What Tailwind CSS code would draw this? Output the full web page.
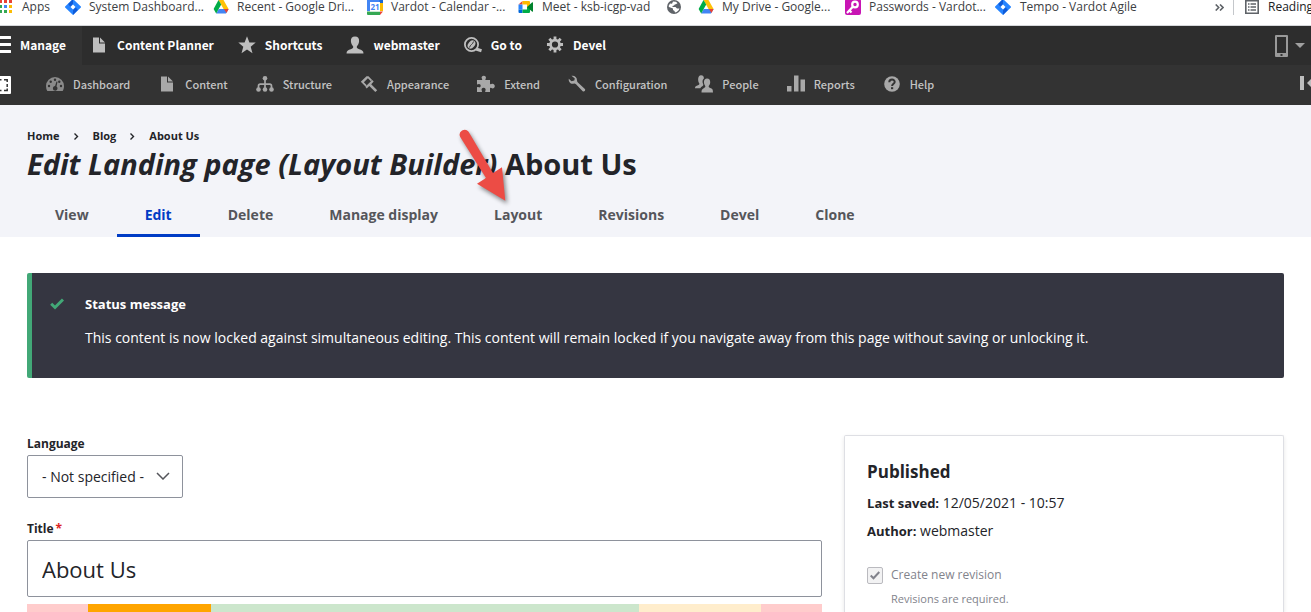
<!DOCTYPE html>
<html lang="en">
<head>
<meta charset="utf-8">
<title>Edit Landing page About Us</title>
<script src="https://cdn.jsdelivr.net/npm/@tailwindcss/browser@4"></script>
</head>
<body class="bg-white font-['Open_Sans',sans-serif] text-[14px] text-[#232429] overflow-x-hidden">

<!-- Shared symbols -->
<svg class="hidden" aria-hidden="true">
  <symbol id="jira" viewBox="0 0 16 16"><path fill="#2684ff" d="M8 0l7.6 7.2a1 1 0 0 1 0 1.5L8 16 .4 8.700a1 1 0 0 1 0-1.500z"/><path fill="#0f5bd8" d="M8 0v5L5.300 7.700 3.200 5z"/><path fill="#0f5bd8" d="M8 16v-5l2.700-2.700L12.800 11z"/><path fill="#fff" d="M8 5.500L10.500 8 8 10.500 5.500 8z"/></symbol>
  <symbol id="drive" viewBox="0 0 16 16"><path fill="#ffc107" d="M5.500 1h5L15.600 10H10.600z"/><path fill="#4285f4" d="M3.200 14.600L5.800 10h9.800L13 14.600z"/><path fill="#ea4335" d="M10.900 10h4.700L13.500 14z"/><path fill="#00ac47" d="M5.500 1L.6 10l2.600 4.600 5-9z"/></symbol>
  <symbol id="file" viewBox="0 0 16 16"><path d="M2 .5h6V6.500h6V15.500H2z"/><path d="M9 .5L14 5.500H9z"/></symbol>
</svg>

<!-- Browser bookmarks -->
<nav aria-label="Bookmarks" class="flex h-[26px] items-start border-b border-[#d5d7da] bg-white text-[12px] leading-[14px] text-[#3c4043] whitespace-nowrap">
  <a href="#" class="flex w-[65px] shrink-0 gap-[9px]">
    <svg class="h-[14px] w-[13px]" viewBox="0 0 13 14"><path fill="#ea4335" d="M0 0h2v3H0zM4 0h3v3H4zM9 0h3v3H9z"/><path fill="#34a853" d="M0 5h2v3H0zM0 10h2v3H0zM4 10h3v3H4z"/><path fill="#4285f4" d="M4 5h3v3H4z"/><path fill="#fbbc05" d="M9 5h3v3H9zM9 10h3v3H9z"/></svg>Apps</a>
  <a href="#" class="flex w-[148px] shrink-0 gap-2"><svg class="-mt-px size-4"><use href="#jira"/></svg>System Dashboard...</a>
  <a href="#" class="flex w-[154px] shrink-0 gap-2"><svg class="-mt-px size-4"><use href="#drive"/></svg>Recent - Google Dri...</a>
  <a href="#" class="flex w-[151px] shrink-0 gap-2"><svg class="-mt-px size-4" viewBox="0 0 16 16"><path fill="#4285f4" d="M0 0h16v12H0z"/><path fill="#1967d2" d="M12.500 0H16v4h-3.500z"/><path fill="#fbbc04" d="M13 4h3v8h-3z"/><path fill="#34a853" d="M0 12.500h13V16H1a1 1 0 0 1-1-1z"/><path fill="#ea4335" d="M13 12.500h3L13 16z"/><path fill="#fff" d="M3 3h10v9.500H3z"/><text x="8" y="11" text-anchor="middle" font-size="8" font-weight="700" fill="#4285f4">21</text></svg>Vardot - Calendar -...</a>
  <a href="#" class="flex w-[149px] shrink-0 gap-2"><svg class="-mt-px size-4" viewBox="0 0 16 16"><path fill="#ea4335" d="M.5 5.500L4.500 2v3.500z"/><path fill="#2684fc" d="M.5 5.500h4v5h-4z"/><path fill="#0066da" d="M.5 10.500h4V14h-3a1 1 0 0 1-1-1z"/><path fill="#ffba00" d="M4.500 2h6.500a1 1 0 0 1 1 1v5H9V5.500H4.500z"/><path fill="#00ac47" d="M4.500 10.500H9V8l3 0v5a1 1 0 0 1-1 1H4.500z"/><path fill="#00832d" d="M9 8l5-4.500c.5-.4 1-.2 1 .3v8.400c0 .5-.5.700-1 .3z"/></svg>Meet - ksb-icgp-vad</a>
  <a href="#" aria-label="Website" class="flex w-[31px] shrink-0"><svg class="size-[14px]" viewBox="0 0 14 14"><circle cx="7" cy="7" r="7" fill="#5f6368"/><path fill="#fff" d="M6 1.500l3 .3 1.500 1.500-1.700 1-1 .2L7 5.500 5.500 6v1h3l1.500 1.500h2.400c-.5 2-2 3.500-4.400 4L7.500 11 6 10V8.500L2 7 1.600 6 3 3.500 5 3.800z"/></svg></a>
  <a href="#" class="flex w-[147px] shrink-0 gap-2"><svg class="-mt-px size-4"><use href="#drive"/></svg>My Drive - Google...</a>
  <a href="#" class="flex w-[150px] shrink-0 gap-2"><svg class="-mt-px size-4" viewBox="0 0 16 16"><rect width="16" height="16" rx="2" fill="#c815b4"/><circle cx="10" cy="5.500" r="2.800" fill="none" stroke="#fff" stroke-width="2.200"/><path stroke="#fff" stroke-width="2.200" d="M8 7.500L2 14M4 11l2.500 2.500"/></svg>Passwords - Vardot...</a>
  <a href="#" class="flex shrink-0 gap-[9px]"><svg class="-mt-px size-4"><use href="#jira"/></svg>Tempo - Vardot Agile</a>
  <button type="button" aria-label="More bookmarks" class="ml-auto mr-[9px] pt-1"><svg class="h-[7px] w-[9px]" viewBox="0 0 9 7" fill="none" stroke="#5f6368" stroke-width="1.600"><path d="M.7.5l3 3-3 3M5 .5l3 3-3 3"/></svg></button>
  <a href="#" class="flex h-[15px] w-[78px] shrink-0 gap-[9px] border-l border-[#c4c7cb] pl-[11px] text-[#202124]"><svg class="size-[14px] shrink-0" viewBox="0 0 14 14" fill="none" stroke="#5f6368"><path stroke-width="1.600" d="M.8.800h12.400v12.400H.8z"/><path stroke-width="1.400" d="M3 4h1.500M5.500 4H11M3 7h1.500M5.500 7H11M3 10h1.500M5.500 10H11"/></svg>Reading</a>
</nav>

<!-- Administration toolbar -->
<nav aria-label="Toolbar" class="flex h-[39px] bg-[#2d2d2d] font-['Noto_Sans_CJK_SC',sans-serif] text-[12px] font-bold text-white fill-[#bebebe] whitespace-nowrap">
  <a href="#" class="flex items-center gap-[9px] bg-[#333] pr-4 pb-0.5"><svg class="h-[17px] w-[11px] fill-white" viewBox="0 0 11 17"><path d="M0 0h10a1 1 0 0 1 0 3H0zM0 7h10a1 1 0 0 1 0 3H0zM0 14h10a1 1 0 0 1 0 3H0z"/></svg>Manage</a>
  <a href="#" class="flex items-center gap-2 pl-[7px] pr-4 pb-0.5"><svg class="h-4 w-5"><use href="#file"/></svg>Content Planner</a>
  <a href="#" class="flex items-center gap-2 pl-[7px] pr-4 pb-0.5"><svg class="h-[18px] w-5" viewBox="0 0 18 18"><path d="M9 .3l2.400 6.200h6.300l-5 4.200 1.800 6.500L9 13.500l-5.500 3.700 1.800-6.500-5-4.200h6.300z"/></svg>Shortcuts</a>
  <a href="#" class="flex items-center gap-2 pl-[7px] pr-4 pb-0.5"><svg class="h-[18px] w-5" viewBox="0 0 18 18"><path d="M9 .5c3 0 4.300 2 4.100 4.800-.1 2.300-1.300 4-2.100 5-.5.800-.2 1.700.7 2.200 1.800 1 5 1.500 5.500 3.300l.3 1.700H.5l.3-1.700c.5-1.800 3.700-2.300 5.500-3.300.9-.5 1.200-1.400.7-2.200-.8-1-2-2.700-2.100-5C4.700 2.500 6 .5 9 .5z"/></svg>webmaster</a>
  <a href="#" class="flex items-center gap-2 pl-[7px] pr-4 pb-0.5"><svg class="h-[18px] w-5" viewBox="0 0 18 18"><circle cx="7.500" cy="8.500" r="6.600" fill="none" stroke="#bebebe" stroke-width="1.800"/><ellipse cx="7.500" cy="8.500" rx="3.200" ry="4.600" transform="rotate(38 7.500 8.500)"/><path fill="none" stroke="#2d2d2d" stroke-width=".9" d="M5.500 11.500c.5-3 3.500-3 4-6"/><path stroke="#bebebe" stroke-width="3" d="M12 13l5.500 1.800"/></svg>Go to</a>
  <a href="#" class="flex items-center gap-2 pl-[7px] pr-4 pb-0.5"><svg class="h-[17px] w-5" viewBox="0 0 18 18"><circle cx="9" cy="9" r="4.700" fill="none" stroke="#bebebe" stroke-width="2.800"/><path stroke="#bebebe" stroke-width="3" d="M9 .5V4M9 14v3.500M.5 9H4M14 9h3.500M3 3l2.500 2.500M12.500 12.500L15 15M15 3l-2.500 2.500M5.500 12.500L3 15"/></svg>Devel</a>
  <button type="button" aria-label="Device preview" class="ml-auto flex items-center gap-[7px] pr-[6px]">
    <svg class="h-[22px] w-[13px]" viewBox="0 0 13 22"><path fill="#999" fill-rule="evenodd" d="M1 0h11a1 1 0 0 1 1 1v20a1 1 0 0 1-1 1H1a1 1 0 0 1-1-1V1a1 1 0 0 1 1-1zm1 2v16h9V2z"/><path fill="#333" d="M5.500 19h2v2h-2z"/></svg>
    <svg class="h-[5px] w-[10px]" viewBox="0 0 10 5"><path fill="#a0a0a0" d="M0 0h10L5 5z"/></svg>
  </button>
</nav>
<nav aria-label="Manage" class="flex h-10 items-center bg-[#333] font-['Noto_Sans_CJK_SC',sans-serif] text-[11px] font-medium text-[#c4c4c4] fill-[#a8a8a8] whitespace-nowrap">
  <a href="#" aria-label="Tools" class="mr-[26px]"><svg class="h-[18px] w-[11px]" viewBox="0 0 11 18"><path fill="#fff" d="M0 0h10a1 1 0 0 1 1 1v16a1 1 0 0 1-1 1H0z"/><path fill="none" stroke="#333" stroke-width="1.500" d="M0 3.800h1.500M4 3.800h3.200V6M7.200 8v3M7.200 12.500v2H4M0 14.500h1.500"/></svg></a>
  <a href="#" class="flex items-center gap-2 pl-2 pr-[19px] pb-0.5"><svg class="h-[18px] w-5" viewBox="0 0 18 18"><path fill="#8a8a8a" d="M9 2a9 9 0 0 1 9 9c0 2-.5 3.600-1.300 5H1.300A10 10 0 0 1 0 11a9 9 0 0 1 9-9z"/><g fill="#333"><circle cx="3" cy="11" r="1.200"/><circle cx="4.700" cy="6.700" r="1.200"/><circle cx="9" cy="4.800" r="1.200"/><circle cx="13.300" cy="6.700" r="1.200"/><circle cx="15" cy="11" r="1.200"/><path d="M10.500 6.500l1 .3-1 4.700a2.300 2.300 0 1 1-1.400-.4z"/></g></svg>Dashboard</a>
  <a href="#" class="flex items-center gap-2 pl-2 pr-[19px] pb-0.5"><svg class="h-4 w-5"><use href="#file"/></svg>Content</a>
  <a href="#" class="flex items-center gap-2 pl-2 pr-[19px] pb-0.5"><svg class="h-[18px] w-5" viewBox="0 0 18 18"><circle cx="9" cy="3.300" r="2.300"/><circle cx="2.500" cy="14.500" r="2.300"/><circle cx="9" cy="14.500" r="2.300"/><circle cx="15.500" cy="14.500" r="2.300"/><path fill="none" stroke="#a8a8a8" stroke-width="1.700" d="M9 4v10M2.500 14V11q0-1.800 1.800-1.800h9.400q1.800 0 1.800 1.800v3"/></svg>Structure</a>
  <a href="#" class="flex items-center gap-2 pl-2 pr-[19px] pb-0.5"><svg class="h-[18px] w-5" viewBox="0 0 18 18"><path d="M6.500 1.200L.8 6.800l4.700 4.700 1.300-1.300-2.900-2.900L7.900 3.300l3 3 1.200-1.200-3.600-3.800z"/><path d="M12.200 5l1.500 1.600-2.500 2.600 6 6-1.900 1.900-6-6-2.600 2.300-1.400-1.600z"/></svg>Appearance</a>
  <a href="#" class="flex items-center gap-2 pl-2 pr-[19px] pb-0.5"><svg class="h-[18px] w-5" viewBox="0 0 18 18"><path d="M0 5h4.600c.8 0 .8-.7.300-1.300C4 2.300 5 .8 6.800.8S9.500 2.300 8.700 3.700C8.200 4.300 8.200 5 9 5h4v3.600c0 .9.7.9 1.400.4 1.500-.9 3.400.1 3.400 2.100s-1.900 3-3.400 2c-.7-.5-1.400-.5-1.400.4V17H8.800c-.8 0-.8-.7-.4-1.300.7-1.300 0-2.900-1.800-2.900s-2.500 1.600-1.800 2.900c.4.600.3 1.300-.4 1.300H0v-4.500c0-.8.7-.7 1.200-.4C2.500 13 3.700 12 3.700 10.700S2.500 8.400 1.200 9.200C.7 9.600 0 9.600 0 8.800z"/></svg>Extend</a>
  <a href="#" class="flex items-center gap-2 pl-2 pr-[19px] pb-0.5"><svg class="h-[18px] w-5" viewBox="0 0 18 18"><path d="M3.500.8C6 .2 9 1.700 9 5.200c0 .9.200 1.600.9 2.200l7 6.500c1.100 1.100-.9 3.500-2.200 2.300L8 9.300c-.8-.7-1.500-.8-2.500-.6C2.500 9.200.3 6.700.8 3.700l2.700 2.600 2.800-.7.500-2.200z"/></svg>Configuration</a>
  <a href="#" class="flex items-center gap-2 pl-2 pr-[19px] pb-0.5"><svg class="h-[18px] w-5" viewBox="0 0 18 18"><path d="M6 .2c2.300 0 3 1.500 2.900 3.300-1.500 1-1.700 3.500-.9 5.200.6 1.200.3 2-.7 2.500-1 .5-1.500 1-2 2.100H0c0-1.700.6-2.300 2.400-2.900 1.700-.5 2.400-1.200 1.700-2.400C2.700 6 2.500 .2 6 .2z"/><path d="M12 3.500c2.300 0 3.300 1.600 3.200 3.700 0 1.500-.6 2.500-1.200 3.400-.7 1.200-.3 1.900 1.300 2.400 2 .7 2.700 1.300 2.700 4.500H6.500c0-2.700.6-3.500 2.200-4.300 1.700-.7 2-1.500 1.300-2.600C8.400 8 8.500 3.500 12 3.500z"/></svg>People</a>
  <a href="#" class="flex items-center gap-2 pl-2 pr-[19px] pb-0.5"><svg class="h-[18px] w-5" viewBox="0 0 18 18"><path d="M0 11h4.500v5.500H0zM7 .5h4.500v16H7zM13.500 4.500H18v12h-4.500z"/></svg>Reports</a>
  <a href="#" class="flex items-center gap-2 pl-2 pr-[19px] pb-0.5"><svg class="h-4 w-5" viewBox="0 0 16 16"><circle cx="8" cy="8" r="7.800"/><path fill="none" stroke="#333" stroke-width="2" d="M5.300 6.300c0-3.600 5.600-3.500 5.400-.3-.1 1.700-2.600 1.800-2.600 4"/><path fill="#333" d="M7 11.200h2.200v2H7z"/></svg>Help</a>
  <button type="button" aria-label="Vertical orientation" class="ml-auto pb-1"><svg class="h-[14px] w-[11px]" viewBox="0 0 11 14"><path fill="#bebebe" d="M0 0h4v14H0zM11 3v8L7 7z"/></svg></button>
</nav>

<!-- Page header -->
<header class="relative h-[132px] bg-[#f3f4f9] px-[27px] pt-[22px]">
  <nav aria-label="Breadcrumb" class="flex h-[18px] items-center gap-[14px] text-[11px] font-bold">
    <a href="#">Home</a>
    <svg class="h-[7px] w-[5px]" viewBox="0 0 5 7" fill="none" stroke="#232429" stroke-width="1.400"><path d="M.5.500l3 3-3 3"/></svg>
    <a href="#">Blog</a>
    <svg class="h-[7px] w-[5px]" viewBox="0 0 5 7" fill="none" stroke="#232429" stroke-width="1.400"><path d="M.5.500l3 3-3 3"/></svg>
    <a href="#">About Us</a>
  </nav>
  <h1 class="text-[29px] leading-[38px] font-bold whitespace-nowrap"><em>Edit Landing page (Layout Builder)</em> About Us</h1>
  <nav aria-label="Tabs" class="mt-[11px] flex h-[43px] leading-[42px] font-bold text-[#55565b] whitespace-nowrap">
    <a href="#" class="px-7">View</a>
    <a href="#" aria-current="page" class="border-b-3 border-[#003cc5] px-7 text-[#003cc5]">Edit</a>
    <a href="#" class="px-7">Delete</a>
    <a href="#" class="px-7">Manage display</a>
    <a href="#" class="px-7">Layout</a>
    <a href="#" class="px-7">Revisions</a>
    <a href="#" class="px-7">Devel</a>
    <a href="#" class="px-7">Clone</a>
  </nav>
  <!-- Callout arrow pointing at the Layout tab -->
  <svg class="absolute left-[450px] top-[15px] h-[95px] w-[70px] drop-shadow-[2px_3px_2px_rgba(0,0,0,0.45)]" viewBox="450 120 70 95"><path fill="#ec4c45" d="M460.200 137a5 5 0 0 1 8.400-5.300L493 173l9-5.700 3.300 33.400-28.300-17 9-5.700z"/></svg>
</header>

<main class="px-[27px] pt-9">
  <section role="status" class="flex h-[105px] rounded-xs border-l-5 border-[#42a877] bg-[#353641] pl-[18px] pt-[21px] text-white">
    <svg class="mt-1 h-[12px] w-[14px] shrink-0" viewBox="0 0 14 12"><path fill="none" stroke="#42a877" stroke-width="3" d="M1.200 5.800l3.800 3.700 8-8"/></svg>
    <div class="pl-[21px] leading-5">
      <h2 class="text-[13px] leading-5 font-bold">Status message</h2>
      <p class="mt-[14px]">This content is now locked against simultaneous editing. This content will remain locked if you navigate away from this page without saving or unlocking it.</p>
    </div>
  </section>

  <form class="mt-[57px] grid grid-cols-[1fr_35%] gap-[22px]">
    <div>
      <label for="language" class="block h-5 text-[12px] leading-[17px] font-bold">Language</label>
      <div class="relative w-[156px]">
        <select id="language" class="h-[43px] w-full appearance-none rounded-xs border border-[#8e929c] bg-white pl-[14px]"><option>- Not specified -</option></select>
        <svg class="pointer-events-none absolute right-[13px] top-[17px] h-[8px] w-[14px]" viewBox="0 0 14 8" fill="none" stroke="#55565b" stroke-width="1.500"><path d="M1 1l6 6 6-6"/></svg>
      </div>
      <label for="title" class="mt-[22px] block h-5 text-[12px] leading-[17px] font-bold">Title<span class="ml-[2px] text-[#dc2323]">*</span></label>
      <input id="title" type="text" value="About Us" class="block h-[57px] w-full rounded-xs border border-[#8e929c] px-[14px] text-[22px]">
      <div class="mt-[7px] flex h-2">
        <div class="bg-[#ffcccc]" style="width:7.700%"></div>
        <div class="bg-[#ffa500]" style="width:15.400%"></div>
        <div class="bg-[#cce6cc]" style="width:53.850%"></div>
        <div class="bg-[#ffedcc]" style="width:15.350%"></div>
        <div class="bg-[#ffcccc]" style="width:7.700%"></div>
      </div>
    </div>
    <aside class="rounded-t-xs border border-b-0 border-[#dedfe4] px-[22px] pt-6 shadow-[0_2px_4px_rgba(0,0,0,0.1)]">
      <h3 class="text-[17px] leading-6 font-bold">Published</h3>
      <p class="mt-[9px] leading-5"><b class="text-[13px]">Last saved:</b> 12/05/2021 - 10:57</p>
      <p class="mt-2 leading-5"><b class="text-[13px]">Author:</b> webmaster</p>
      <div class="mt-6 grid grid-cols-[16px_1fr] items-center gap-x-2 text-[#82838c]">
        <div class="relative h-[17px]">
          <input id="revision" type="checkbox" checked disabled class="block h-[17px] w-4 appearance-none rounded-xs border border-[#bababf] bg-[#f2f2f3]">
          <svg class="pointer-events-none absolute left-[3px] top-[4px] h-[9px] w-[10px]" viewBox="0 0 10 9" fill="none" stroke="#82838c" stroke-width="2"><path d="M.7 4.500l2.800 2.800L9.300 1"/></svg>
        </div>
        <label for="revision" class="text-[12px] leading-5">Create new revision</label>
        <p class="col-start-2 mt-1 text-[11px] leading-5">Revisions are required.</p>
      </div>
    </aside>
  </form>
</main>
</body>
</html>
